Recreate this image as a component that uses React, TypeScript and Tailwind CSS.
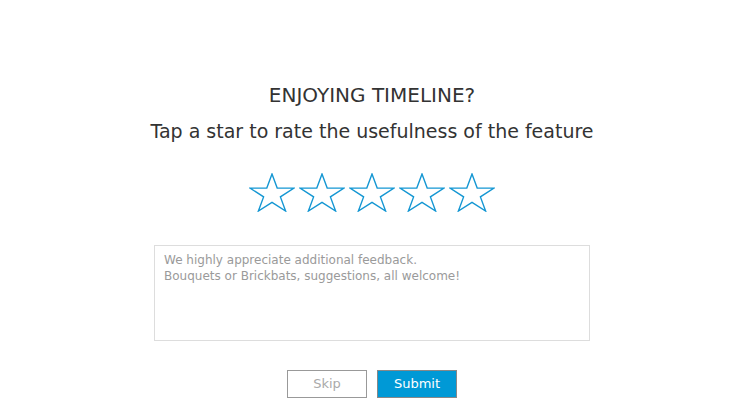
import React from "react";

function Star() {
  return (
    <svg width="46" height="39" viewBox="-1 -1 46 39" className="block">
      <polygon
        points="22,0 27.2,14.1 44,14.1 30.4,22.9 35.6,37 22,28.3 8.4,37 13.6,22.9 0,14.1 16.8,14.1"
        fill="none"
        stroke="#1597d3"
        strokeWidth="1.4"
        strokeLinejoin="miter"
      />
    </svg>
  );
}

export default function App() {
  return (
    <div
      className="w-full h-[419px] bg-white flex flex-col items-center pl-[7px]"
      style={{ fontFamily: '"DejaVu Sans", sans-serif' }}
    >
      <div className="mt-[83px] text-[20px] leading-[24px] text-[#333]">ENJOYING TIMELINE?</div>
      <div className="mt-[11px] text-[19px] leading-[26px] text-[#333]">
        Tap a star to rate the usefulness of the feature
      </div>
      <div className="mt-[29px] flex gap-[4px]">
        <Star />
        <Star />
        <Star />
        <Star />
        <Star />
      </div>
      <textarea
        className="mt-[33px] w-[436px] h-[96px] border border-[#dddddd] px-[9px] pt-[6px] pb-[7px] text-[12px] leading-[16px] text-[#333] placeholder:text-[#9a9a9a] resize-none outline-none"
        style={{ fontFamily: '"DejaVu Sans", sans-serif' }}
        placeholder={"We highly appreciate additional feedback.\nBouquets or Brickbats, suggestions, all welcome!"}
      />
      <div className="mt-[29px] flex gap-[10px]">
        <button className="w-[80px] h-[28px] border border-[#999] bg-white text-[#aaa] text-[13px]">Skip</button>
        <button className="w-[80px] h-[28px] border border-[#888] bg-[#0099d6] text-white text-[13px]">Submit</button>
      </div>
    </div>
  );
}
